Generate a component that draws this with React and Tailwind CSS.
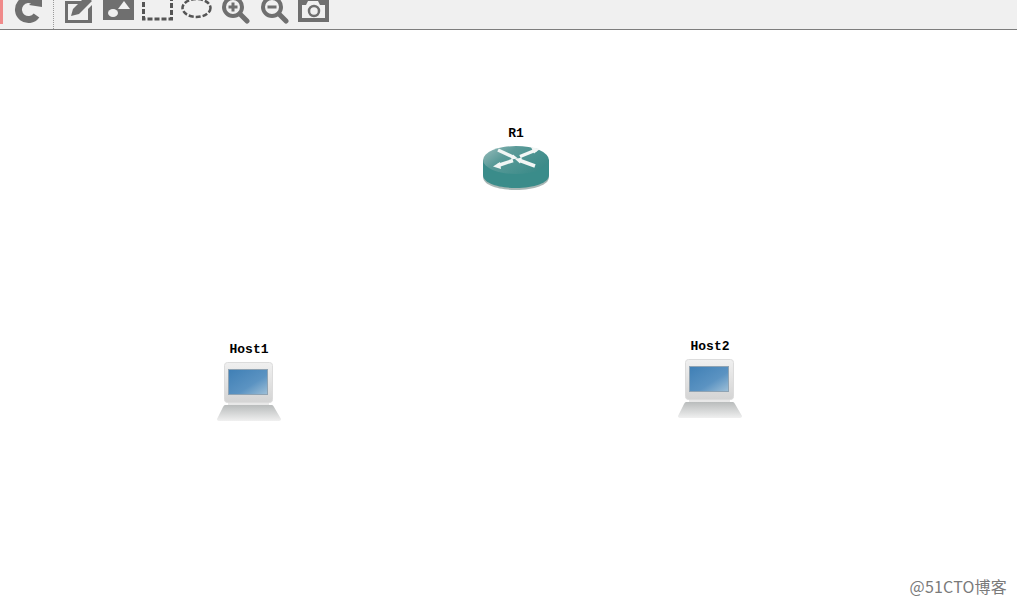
const G = "#6f6f6f";

function Router({ className }) {
  return (
    <svg className={className} width="70" height="48" viewBox="0 0 70 48">
      <defs>
        <linearGradient id="rt" x1="0" y1="0" x2="1" y2="0.6">
          <stop offset="0" stopColor="#9dbfbe" />
          <stop offset="0.4" stopColor="#5a9a98" />
          <stop offset="1" stopColor="#3b8b89" />
        </linearGradient>
      </defs>
      <path d="M2 16 V33 C2 41 17 46 35 46 C53 46 68 41 68 33 V16 Z" fill="#a9b7b5" />
      <path d="M2 16 V31 C2 39 17 44 35 44 C53 44 68 39 68 31 V16 Z" fill="#3a8c8a" />
      <ellipse cx="35" cy="16" rx="33" ry="14" fill="url(#rt)" />
      <g stroke="#f2f6f5" strokeWidth="3.5" fill="none">
        <path d="M17 6 L32 13" />
        <path d="M55 6 L39 12.5" />
        <path d="M17 21.5 L32 16.5" />
        <path d="M39 16.5 L54 22" />
      </g>
      <g fill="#f2f6f5">
        <path d="M32 10.5 L37 14.5 L30 15.5 Z" />
        <path d="M50 3 L59 5 L53 9.5 Z" />
        <path d="M19 18 L12 22.5 L20 25 Z" />
        <path d="M41 13.5 L34 15 L39 19.5 Z" />
      </g>
    </svg>
  );
}

function Laptop({ id }) {
  return (
    <svg width="70" height="60" viewBox="0 0 70 60">
      <defs>
        <linearGradient id={`sc${id}`} x1="0" y1="0" x2="1" y2="1">
          <stop offset="0" stopColor="#3f7fb5" />
          <stop offset="0.6" stopColor="#5b93c2" />
          <stop offset="1" stopColor="#9fc0d8" />
        </linearGradient>
        <linearGradient id={`bd${id}`} x1="0" y1="0" x2="0" y2="1">
          <stop offset="0" stopColor="#f0f0f0" />
          <stop offset="1" stopColor="#d4d4d4" />
        </linearGradient>
        <linearGradient id={`kb${id}`} x1="0" y1="0" x2="0" y2="1">
          <stop offset="0" stopColor="#b9bcbc" />
          <stop offset="0.7" stopColor="#dfe0e0" />
          <stop offset="1" stopColor="#f0f0f0" />
        </linearGradient>
      </defs>
      <rect x="10.5" y="0.5" width="48" height="40" rx="3" fill={`url(#bd${id})`} stroke="#dcdcdc" />
      <rect x="14.5" y="7.5" width="39" height="25" fill={`url(#sc${id})`} stroke="#8fa3b3" />
      <path d="M14 41 H55 V43 H14 Z" fill="#e8e8e8" />
      <path d="M11 43 H58 Q59 43 60 45 L67 57 Q67 59 64 59 H6 Q3 59 3 57 L9 45 Q10 43 11 43 Z" fill={`url(#kb${id})`} />
    </svg>
  );
}

function Toolbar() {
  return (
    <header className="h-[30px] shrink-0 overflow-hidden bg-[#f0f0f0] border-b border-[#7d7d7d] flex items-end pb-[5px]">
      <div className="w-[3px] h-[24px] bg-[#f08a8a] shrink-0" />
      <svg className="ml-[11px] shrink-0" width="28" height="30" viewBox="0 0 28 30">
        <path d="M22.5 21.5 A10 10 0 1 1 21 8" fill="none" stroke={G} strokeWidth="7" />
        <path d="M15 11 L28 13 L28 0 Z" fill={G} />
      </svg>
      <div className="ml-[11px] w-0 h-[29px] border-l border-dotted border-[#9a9a9a] shrink-0 -mb-[5px]" />
      <svg className="ml-[10px] shrink-0" width="30" height="30" viewBox="0 0 30 30">
        <path d="M1 7 H20 L16 10 H4 V26 H24 V15 L28 11 V29 H1 Z" fill={G} />
        <path d="M7 22 L9 15 L22 2 L28 7 L15 20 Z" fill={G} />
      </svg>
      <svg className="ml-[9px] shrink-0" width="31" height="30" viewBox="0 0 31 30">
        <rect x="0" y="2" width="31" height="24" fill={G} />
        <ellipse cx="10" cy="19" rx="5" ry="4" fill="#f0f0f0" />
        <path d="M21 7 L27 15 H15 Z" fill="#f0f0f0" />
      </svg>
      <svg className="ml-[8px] shrink-0" width="31" height="30" viewBox="0 0 31 30">
        <rect x="1.5" y="2" width="28" height="23" fill="#f0f0f0" stroke="#555" strokeWidth="3" strokeDasharray="5 2" />
      </svg>
      <svg className="ml-[8px] shrink-0" width="31" height="30" viewBox="0 0 31 30">
        <ellipse cx="15.5" cy="14" rx="14" ry="9" fill="none" stroke="#555" strokeWidth="2.5" strokeDasharray="5 2" />
      </svg>
      <svg className="ml-[10px] shrink-0" width="28" height="30" viewBox="0 0 28 30">
        <circle cx="11" cy="13" r="9" fill="#f0f0f0" stroke={G} strokeWidth="4" />
        <path d="M18 20 L25 27" stroke={G} strokeWidth="5" strokeLinecap="round" />
        <path d="M6.5 13 H15.5 M11 8.5 V17.5" stroke={G} strokeWidth="3" />
      </svg>
      <svg className="ml-[11px] shrink-0" width="28" height="30" viewBox="0 0 28 30">
        <circle cx="11" cy="13" r="9" fill="#f0f0f0" stroke={G} strokeWidth="4" />
        <path d="M18 20 L25 27" stroke={G} strokeWidth="5" strokeLinecap="round" />
        <path d="M6.5 13 H15.5" stroke={G} strokeWidth="3" />
      </svg>
      <svg className="ml-[9px] shrink-0" width="31" height="30" viewBox="0 0 31 30">
        <path d="M0 4 H31 V28 H0 Z" fill={G} />
        <path d="M4 11 H8 L10 7 H20 L22 11 H27 V24 H4 Z" fill="#f0f0f0" />
        <circle cx="16" cy="17" r="5" fill="none" stroke={G} strokeWidth="2.5" />
      </svg>
    </header>
  );
}

function Node({ label, x, y, children }) {
  return (
    <div className="absolute flex flex-col items-center w-[70px]" style={{ left: x, top: y }}>
      <span className="font-['Liberation_Mono',monospace] font-bold text-[13px] leading-[14px] text-black">{label}</span>
      {children}
    </div>
  );
}

export default function App() {
  return (
    <div className="w-[1017px] h-[604px] bg-white flex flex-col overflow-hidden">
      <Toolbar />
      <main className="relative flex-1">
        <Node label="R1" x={481} y={97}>
          <Router className="mt-[3px]" />
        </Node>
        <Node label="Host1" x={214} y={313}>
          <div className="mt-[5px]"><Laptop id="a" /></div>
        </Node>
        <Node label="Host2" x={675} y={310}>
          <div className="mt-[5px]"><Laptop id="b" /></div>
        </Node>
        <span className="absolute right-[10px] bottom-[9px] font-['Noto_Sans_CJK_SC','Liberation_Sans',sans-serif] text-[16px] tracking-[0.2px] leading-[18px] text-[#7a7a7a]">@51CTO博客</span>
      </main>
    </div>
  );
}
